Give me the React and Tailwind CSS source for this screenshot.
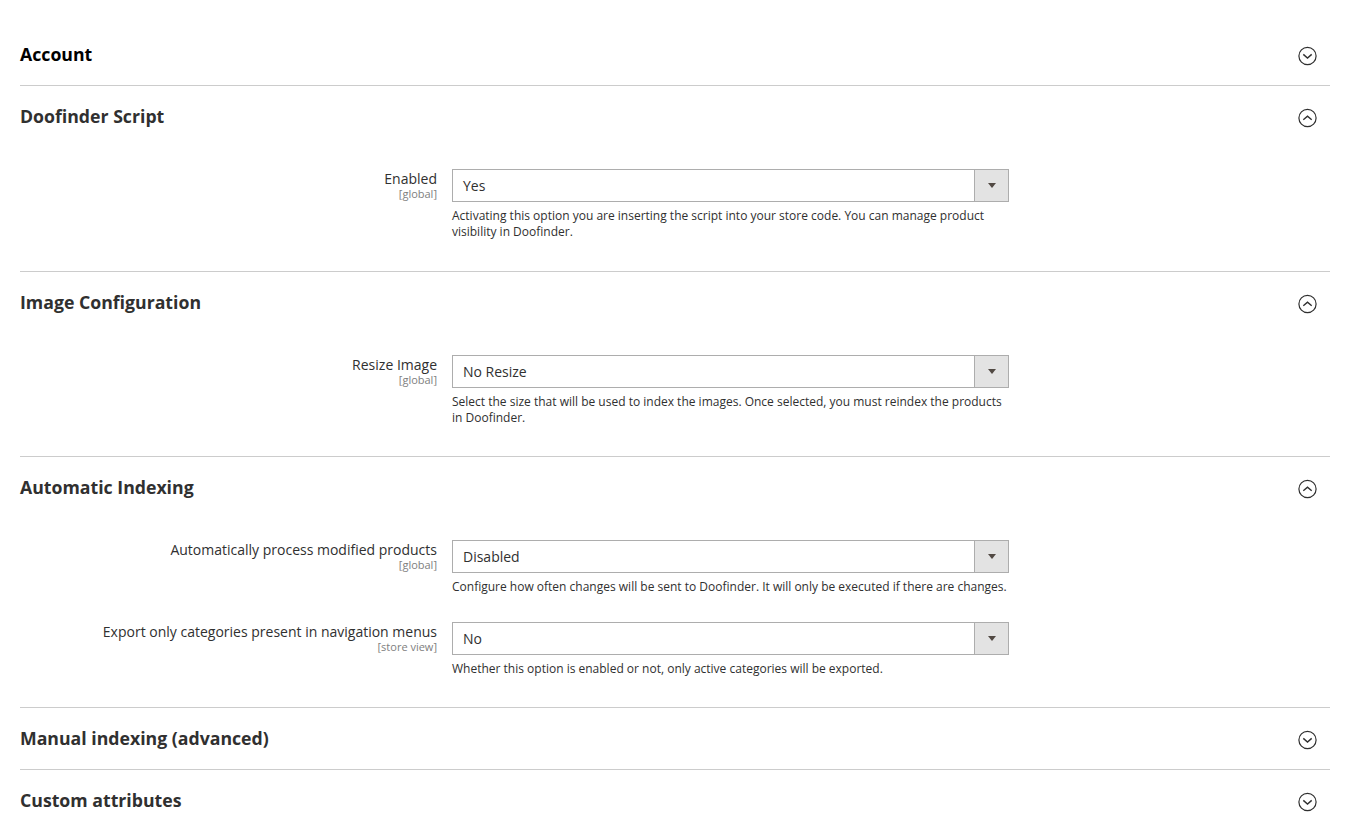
import React from 'react';

function Chevron({ up }) {
  return (
    <svg width="20" height="20" viewBox="0 0 20 20" fill="none" stroke="#303030">
      <circle cx="10.5" cy="10" r="8.6" strokeWidth="1.2" />
      <path d={up ? 'M6.3 11.8 L10.5 8.2 L14.7 11.8' : 'M6.3 8.4 L10.5 12 L14.7 8.4'} strokeWidth="1.4" />
    </svg>
  );
}

function Header({ title, open, dark }) {
  return (
    <div className="flex items-center justify-between h-[61px] pr-[13px]">
      <h2 className={`text-[17.7px] font-bold leading-[24px] -mt-[2px] ${dark ? 'text-black' : 'text-[#303030]'}`}>{title}</h2>
      <div className="pt-[2px] flex"><Chevron up={open} /></div>
    </div>
  );
}

function Field({ label, scope, value, note, gap }) {
  return (
    <div className={`flex ${gap || ''}`}>
      <div className="w-[437px] text-right pt-[2px] shrink-0">
        <div className="text-[14px] leading-[16px] text-[#303030]">{label}</div>
        <div className="text-[11px] leading-[14px] text-[#808080]">{scope}</div>
      </div>
      <div className="ml-[15px] w-[557px]">
        <div className="flex h-[33px] border border-[#adadad] bg-white">
          <div className="flex-1 pl-[10px] text-[14px] leading-[31px] text-[#303030]">{value}</div>
          <div className="w-[34px] bg-[#e3e3e3] border-l border-[#adadad] flex items-center justify-center">
            <div className="w-0 h-0 border-x-[4.5px] border-x-transparent border-t-[5px] border-t-[#514943]" />
          </div>
        </div>
        <p className="mt-[6px] text-[12px] leading-[16px] text-[#303030] w-[560px]">{note}</p>
      </div>
    </div>
  );
}

export default function App() {
  return (
    <div className="h-[830px] overflow-hidden bg-white pl-[20px] pr-[18px] pt-[24px]" style={{ fontFamily: '"Open Sans", sans-serif' }}>
      <section className="border-b border-[#cccccc]">
        <Header title="Account" dark />
      </section>

      <section className="border-b border-[#cccccc] h-[186px]">
        <Header title="Doofinder Script" open />
        <div className="pt-[22px] -ml-[20px]">
          <Field
            label="Enabled"
            scope="[global]"
            value="Yes"
            note="Activating this option you are inserting the script into your store code. You can manage product visibility in Doofinder."
          />
        </div>
      </section>

      <section className="border-b border-[#cccccc] h-[185px]">
        <Header title="Image Configuration" open />
        <div className="pt-[22px] -ml-[20px]">
          <Field
            label="Resize Image"
            scope="[global]"
            value="No Resize"
            note="Select the size that will be used to index the images. Once selected, you must reindex the products in Doofinder."
          />
        </div>
      </section>

      <section className="border-b border-[#cccccc] h-[251px]">
        <Header title="Automatic Indexing" open />
        <div className="pt-[22px] -ml-[20px]">
          <Field
            label="Automatically process modified products"
            scope="[global]"
            value="Disabled"
            note="Configure how often changes will be sent to Doofinder. It will only be executed if there are changes."
          />
          <Field
            gap="mt-[27px]"
            label="Export only categories present in navigation menus"
            scope="[store view]"
            value="No"
            note="Whether this option is enabled or not, only active categories will be exported."
          />
        </div>
      </section>

      <section className="border-b border-[#cccccc]">
        <Header title="Manual indexing (advanced)" />
      </section>

      <section>
        <Header title="Custom attributes" />
      </section>
    </div>
  );
}
